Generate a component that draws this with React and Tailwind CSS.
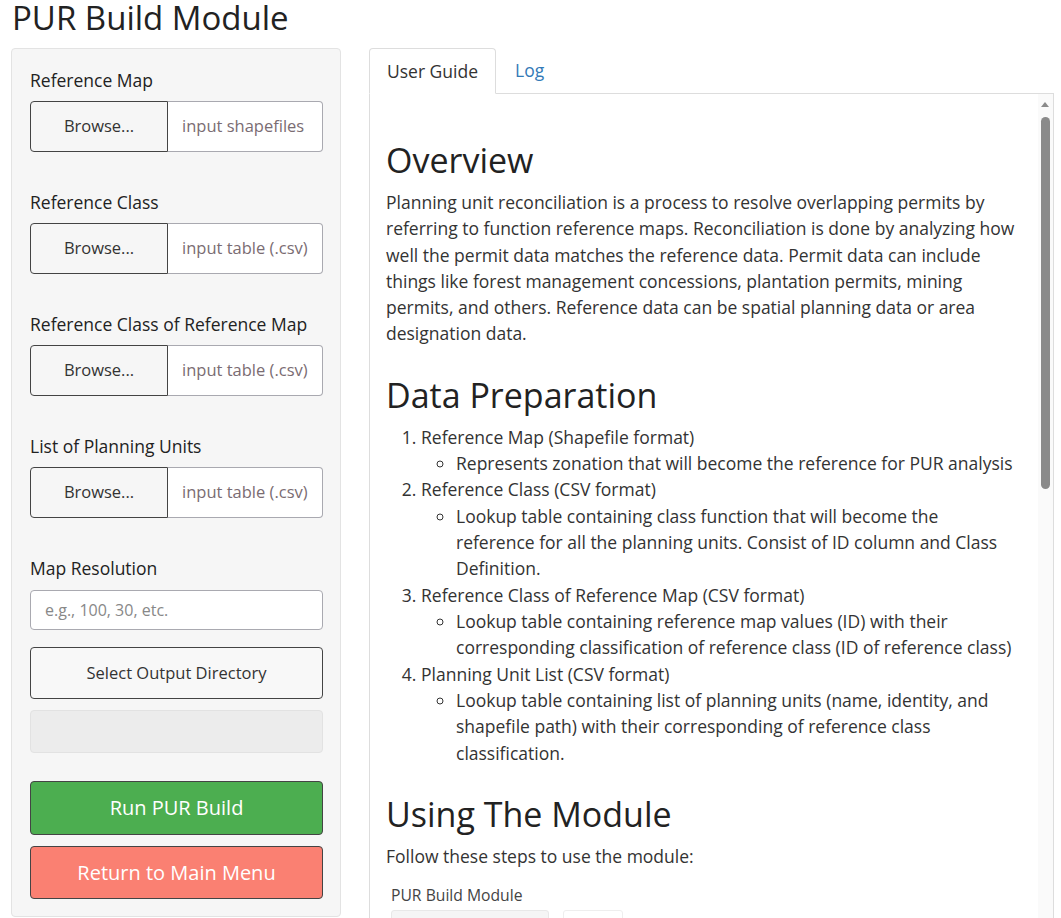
import React from "react";

function FileInput({ label, placeholder }) {
    return (
        <div className="mb-[37px]">
            <div className="text-[17.5px] leading-[26px] text-[#222]">{label}</div>
            <div className="mt-[8px] flex h-[51px]">
                <div className="w-[138px] shrink-0 flex items-center justify-center border border-[#444] rounded-l-[4px] bg-[#f6f6f6] text-[16.5px] text-[#333]">
                    Browse...
                </div>
                <div className="flex-1 flex items-center pl-[14px] border border-l-0 border-[#a9a9b0] rounded-r-[4px] bg-white text-[16.5px] text-[#7a6c72]">
                    {placeholder}
                </div>
            </div>
        </div>
    );
}

export default function App() {
    return (
        <div className="font-['Open_Sans',sans-serif] text-[#333] pl-[11px] bg-white min-h-screen">
            <h1 className="text-[33px] leading-[36px] pl-[1px] text-[#222]">PUR Build Module</h1>

            <div className="flex items-start gap-[28px] mt-[12px]">
                {/* Sidebar */}
                <div className="w-[330px] shrink-0 bg-[#f6f6f6] border border-[#e3e3e3] rounded-[4px] pl-[18px] pr-[17px] pt-[18px] pb-[17px]">
                    <FileInput label="Reference Map" placeholder="input shapefiles" />
                    <FileInput label="Reference Class" placeholder="input table (.csv)" />
                    <FileInput label="Reference Class of Reference Map" placeholder="input table (.csv)" />
                    <FileInput label="List of Planning Units" placeholder="input table (.csv)" />

                    <div className="text-[17.5px] leading-[26px] text-[#222]">Map Resolution</div>
                    <div className="mt-[9px] h-[40px] flex items-center pl-[14px] border border-[#a9a9b0] rounded-[4px] bg-white text-[16px] text-[#888]">
                        e.g., 100, 30, etc.
                    </div>

                    <button className="mt-[17px] w-full h-[52px] border border-[#444] rounded-[4px] bg-[#f8f8f8] text-[16.5px] text-[#333]">
                        Select Output Directory
                    </button>

                    <div className="mt-[11px] h-[43px] border border-[#e2e2e2] rounded-[4px] bg-[#ececec]" />

                    <button className="mt-[28px] w-full h-[54px] border border-[#444] rounded-[4px] bg-[#4cae50] text-white text-[20px]">
                        Run PUR Build
                    </button>
                    <button className="mt-[11px] w-full h-[53px] border border-[#444] rounded-[4px] bg-[#fa8072] text-white text-[20px]">
                        Return to Main Menu
                    </button>
                </div>

                {/* Main panel */}
                <div className="w-[685px] shrink-0">
                    <div className="flex h-[46px] border-b border-[#ddd] text-[17.5px]">
                        <div className="-mb-px px-[17px] flex items-center border border-[#ddd] border-b-white rounded-t-[4px] bg-white text-[#333]">
                            User Guide
                        </div>
                        <div className="ml-[1px] px-[18px] flex items-center text-[#337ab7]">Log</div>
                    </div>

                    <div className="relative h-[830px] overflow-hidden border border-t-0 border-[#ddd] bg-white">
                        <div className="pl-[16px] pr-[34px] pt-[18px] text-[17.5px] leading-[26.25px] text-[#333]">
                            <h2 className="mt-[30px] mb-[10px] text-[34px] leading-[37px] text-[#222]">Overview</h2>
                            <p>
                                Planning unit reconciliation is a process to resolve overlapping permits by referring to
                                function reference maps. Reconciliation is done by analyzing how well the permit data
                                matches the reference data. Permit data can include things like forest management
                                concessions, plantation permits, mining permits, and others. Reference data can be
                                spatial planning data or area designation data.
                            </p>

                            <h2 className="mt-[30px] mb-[10px] text-[34px] leading-[37px] text-[#222]">Data Preparation</h2>
                            <ol className="list-decimal pl-[35px] mb-[2px] leading-[26.35px]">
                                <li>
                                    Reference Map (Shapefile format)
                                    <ul className="list-[circle] pl-[35px]">
                                        <li>Represents zonation that will become the reference for PUR analysis</li>
                                    </ul>
                                </li>
                                <li>
                                    Reference Class (CSV format)
                                    <ul className="list-[circle] pl-[35px]">
                                        <li>
                                            Lookup table containing class function that will become the reference for
                                            all the planning units. Consist of ID column and Class Definition.
                                        </li>
                                    </ul>
                                </li>
                                <li>
                                    Reference Class of Reference Map (CSV format)
                                    <ul className="list-[circle] pl-[35px]">
                                        <li>
                                            Lookup table containing reference map values (ID) with their corresponding
                                            classification of reference class (ID of reference class)
                                        </li>
                                    </ul>
                                </li>
                                <li>
                                    Planning Unit List (CSV format)
                                    <ul className="list-[circle] pl-[35px]">
                                        <li>
                                            Lookup table containing list of planning units (name, identity, and shapefile
                                            path) with their corresponding of reference class classification.
                                        </li>
                                    </ul>
                                </li>
                            </ol>

                            <h2 className="mt-[30px] mb-[10px] text-[34px] leading-[37px] text-[#222]">Using The Module</h2>
                            <p>Follow these steps to use the module:</p>

                            {/* screenshot preview */}
                            <div className="mt-[12px] pl-[5px] pt-[3px]">
                                <div className="text-[15.7px] leading-[22px] text-[#444]">PUR Build Module</div>
                                <div className="mt-[4px] flex gap-[14px]">
                                    <div className="w-[158px] h-[40px] bg-[#f5f5f5] border border-[#e8e8e8] rounded-[3px]" />
                                    <div className="w-[60px] h-[40px] border border-[#eee] rounded-[3px]" />
                                </div>
                            </div>
                        </div>

                        {/* scrollbar */}
                        <div className="absolute right-0 top-0 bottom-0 w-[15px] bg-[#fafafa]">
                            <div className="absolute left-[3px] top-[8px] w-0 h-0 border-l-[4px] border-r-[4px] border-b-[5px] border-l-transparent border-r-transparent border-b-[#8a8a8a]" />
                            <div className="absolute left-[3px] top-[23px] w-[9px] h-[372px] rounded-full bg-[#8a8a8a]" />
                        </div>
                    </div>
                </div>
            </div>
        </div>
    );
}
